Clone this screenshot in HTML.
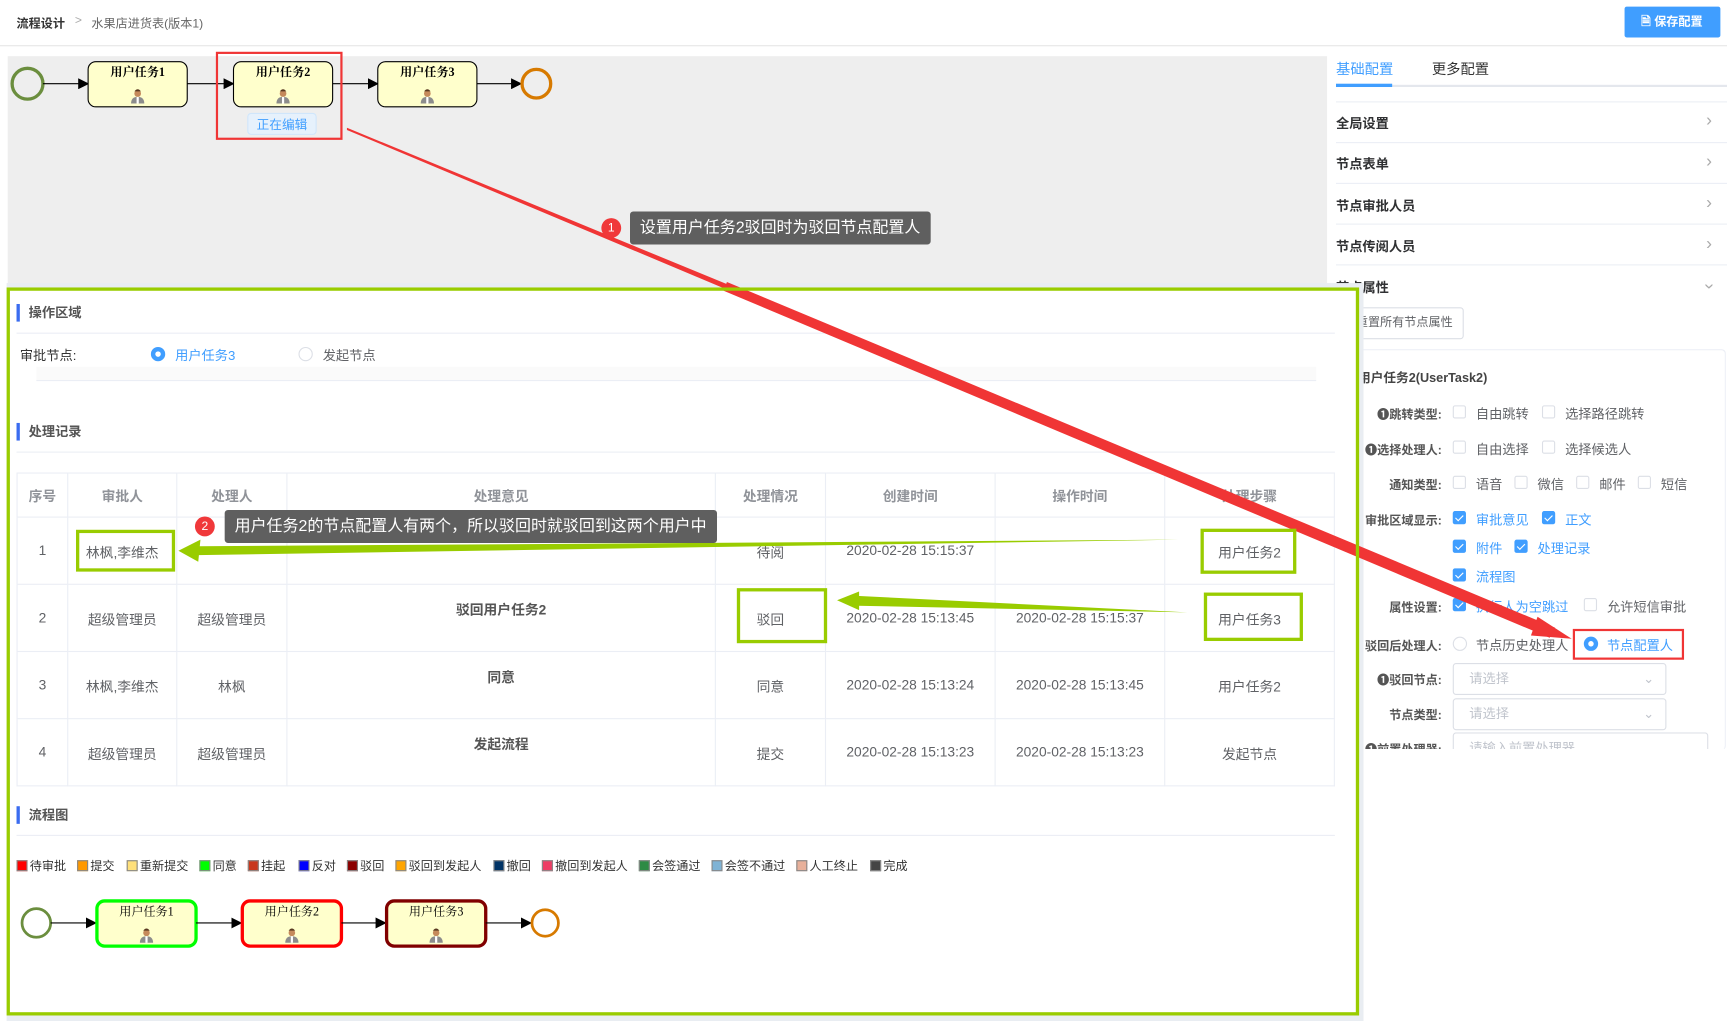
<!DOCTYPE html>
<html><head><meta charset="utf-8">
<style>
*{margin:0;padding:0;box-sizing:border-box}
html,body{width:1727px;height:1021px;overflow:hidden;background:#fff}
#w{position:absolute;left:0;top:0;width:1568px;height:927px;transform:scale(1.10140);transform-origin:0 0;font-family:"Liberation Sans","Noto Sans CJK SC",sans-serif;font-size:12px;color:#303133}
.a{position:absolute;white-space:nowrap}
.rowsep{position:absolute;left:1213px;width:355px;height:1px;background:#ebeef5}
.rt{position:absolute;left:1213px;font-size:12px;font-weight:bold;color:#303133}
.chev{position:absolute;left:1549px;color:#aaa;font-size:16px;line-height:16px}
.lbl{position:absolute;width:80px;text-align:right;left:1229px;font-size:11px;font-weight:bold;color:#555}
.cb{position:absolute;width:12px;height:12px;border:1px solid #dcdfe6;border-radius:2px;background:#fff}
.cb.on{background:#409eff;border-color:#409eff}
.cb.on:after{content:"";position:absolute;left:3px;top:1px;width:3px;height:6px;border:solid #fff;border-width:0 1px 1px 0;transform:rotate(45deg)}
.ct{position:absolute;font-size:12px;color:#606266}
.ct.b{color:#409eff}
.sec{position:absolute;left:15px;border-left:3px solid #3a6cf0;padding-left:8px;font-size:12px;font-weight:bold;color:#555;height:16px;line-height:16px}
.hl{position:absolute;height:1px;background:#ebeef5}
table{position:absolute;left:15px;top:429px;width:1197px;border-collapse:collapse;font-size:12.5px;color:#606266}
td{border:1px solid #ebeef5;text-align:center}
thead td{height:40px;color:#909399;font-weight:bold}
tbody td{height:61px}
.lg{position:absolute;top:778px;font-size:11px;color:#333}
.lg i{display:inline-block;width:10px;height:10px;vertical-align:-1px;margin-right:2px;border:1px solid #888}
.gbox{position:absolute;border:3px solid #99cc00}
.rbox{position:absolute;border:2px solid #f03535}
.tip{position:absolute;background:#5f5f5f;color:#fff;font-size:14.5px;padding:0 9px;line-height:30px;border-radius:3px}
.num{position:absolute;width:18px;height:18px;border-radius:9px;background:#f0383a;color:#fff;font-size:11px;text-align:center;line-height:18px}
</style></head><body><div id="w">
<div class="a" style="left:15px;top:13px;font-weight:bold;font-size:11px;color:#333">流程设计</div>
<div class="a" style="left:68px;top:13px;font-size:11px;color:#aaa">&gt;</div>
<div class="a" style="left:83px;top:13px;font-size:11px;color:#666">水果店进货表(版本1)</div>
<div class="a" style="left:0;top:41px;width:1568px;height:1px;background:#e6e6e6"></div>
<div class="a" style="left:1475px;top:6px;width:87px;height:28px;background:#409eff;border-radius:2px;color:#fff;font-size:11px;font-weight:bold;line-height:28px;padding-left:15px">🗎 保存配置</div>
<div class="a" style="left:7px;top:51px;width:1198px;height:212px;background:#eeeeee"></div>
<div class="a" style="left:1205px;top:51px;width:8px;height:876px;background:#fff"></div>
<div class="a" style="left:1213px;top:52px;font-size:13px;color:#409eff">基础配置</div>
<div class="a" style="left:1300px;top:52px;font-size:13px;color:#333">更多配置</div>
<div class="a" style="left:1213px;top:77px;width:355px;height:2px;background:#e4e7ed"></div>
<div class="a" style="left:1213px;top:76px;width:51px;height:3px;background:#409eff"></div>
<div class="rowsep" style="top:92px"></div>
<div class="rt" style="top:103px">全局设置</div><div class="chev" style="top:102px">›</div>
<div class="rowsep" style="top:129px"></div>
<div class="rt" style="top:140px">节点表单</div><div class="chev" style="top:139px">›</div>
<div class="rowsep" style="top:166px"></div>
<div class="rt" style="top:178px">节点审批人员</div><div class="chev" style="top:177px">›</div>
<div class="rowsep" style="top:203px"></div>
<div class="rt" style="top:215px">节点传阅人员</div><div class="chev" style="top:214px">›</div>
<div class="rowsep" style="top:240px"></div>
<div class="rt" style="top:252px">节点属性</div><div class="chev" style="top:252px;transform:rotate(90deg)">›</div>
<div class="a" style="left:1222px;top:279px;width:107px;height:29px;border:1px solid #dcdfe6;border-radius:3px;font-size:11px;color:#606266;line-height:27px;padding-left:8px">重置所有节点属性</div>
<div class="a" style="left:1225px;top:317px;width:342px;height:364px;border:1px solid #ebeef5;border-bottom:none;border-radius:4px"></div>
<div class="a" style="left:1225px;top:680px;width:343px;height:247px;background:#fff"></div>
<div class="a" style="left:1233px;top:335px;font-size:11.5px;font-weight:bold;color:#444">用户任务2(UserTask2)</div>
<div class="lbl" style="top:368px">❶跳转类型:</div>
<div class="cb" style="left:1319px;top:368px"></div><div class="ct" style="left:1340px;top:367px">自由跳转</div>
<div class="cb" style="left:1400px;top:368px"></div><div class="ct" style="left:1421px;top:367px">选择路径跳转</div>
<div class="lbl" style="top:400px">❶选择处理人:</div>
<div class="cb" style="left:1319px;top:400px"></div><div class="ct" style="left:1340px;top:399px">自由选择</div>
<div class="cb" style="left:1400px;top:400px"></div><div class="ct" style="left:1421px;top:399px">选择候选人</div>
<div class="lbl" style="top:432px">通知类型:</div>
<div class="cb" style="left:1319px;top:432px"></div><div class="ct" style="left:1340px;top:431px">语音</div>
<div class="cb" style="left:1375px;top:432px"></div><div class="ct" style="left:1396px;top:431px">微信</div>
<div class="cb" style="left:1431px;top:432px"></div><div class="ct" style="left:1452px;top:431px">邮件</div>
<div class="cb" style="left:1487px;top:432px"></div><div class="ct" style="left:1508px;top:431px">短信</div>
<div class="lbl" style="top:464px">审批区域显示:</div>
<div class="cb on" style="left:1319px;top:464px"></div><div class="ct b" style="left:1340px;top:463px">审批意见</div>
<div class="cb on" style="left:1400px;top:464px"></div><div class="ct b" style="left:1421px;top:463px">正文</div>
<div class="cb on" style="left:1319px;top:490px"></div><div class="ct b" style="left:1340px;top:489px">附件</div>
<div class="cb on" style="left:1375px;top:490px"></div><div class="ct b" style="left:1396px;top:489px">处理记录</div>
<div class="cb on" style="left:1319px;top:516px"></div><div class="ct b" style="left:1340px;top:515px">流程图</div>
<div class="lbl" style="top:543px">属性设置:</div>
<div class="cb on" style="left:1319px;top:543px"></div><div class="ct b" style="left:1340px;top:542px">执行人为空跳过</div>
<div class="cb" style="left:1438px;top:543px"></div><div class="ct" style="left:1459px;top:542px">允许短信审批</div>
<div class="lbl" style="top:578px">驳回后处理人:</div>
<div class="a" style="left:1319px;top:578px;width:13px;height:13px;border:1px solid #dcdfe6;border-radius:7px"></div><div class="ct" style="left:1340px;top:577px">节点历史处理人</div>
<div class="a" style="left:1438px;top:578px;width:13px;height:13px;border:4px solid #409eff;border-radius:7px;background:#fff"></div><div class="ct b" style="left:1459px;top:577px">节点配置人</div>
<div class="lbl" style="top:609px">❶驳回节点:</div>
<div class="a" style="left:1319px;top:602px;width:194px;height:29px;border:1px solid #dcdfe6;border-radius:3px;color:#c0c4cc;font-size:12px;line-height:27px;padding-left:14px">请选择<span style="position:absolute;right:10px;color:#c0c4cc">⌄</span></div>
<div class="lbl" style="top:641px">节点类型:</div>
<div class="a" style="left:1319px;top:634px;width:194px;height:29px;border:1px solid #dcdfe6;border-radius:3px;color:#c0c4cc;font-size:12px;line-height:27px;padding-left:14px">请选择<span style="position:absolute;right:10px;color:#c0c4cc">⌄</span></div>
<div class="a" style="left:1225px;top:665px;width:340px;height:15px;overflow:hidden">
<div class="a" style="left:4px;top:7px;width:80px;text-align:right;font-size:11px;font-weight:bold;color:#555">❶前置处理器:</div>
<div class="a" style="left:94px;top:0;width:232px;height:29px;border:1px solid #dcdfe6;border-radius:3px;color:#c0c4cc;font-size:12px;line-height:27px;padding-left:14px">请输入前置处理器</div></div>

<div class="a" style="left:6px;top:257px;width:1232px;height:670px;background:#e9edf2"></div>
<div class="a" style="left:6px;top:261px;width:1228px;height:661px;background:#fff"></div>
<div class="sec" style="top:276px">操作区域</div>
<div class="hl" style="left:15px;top:302px;width:1197px"></div>
<div class="a" style="left:18px;top:314px;font-size:12px;color:#333">审批节点:</div>
<div class="a" style="left:137px;top:315px;width:13px;height:13px;border:4px solid #409eff;border-radius:7px"></div>
<div class="a" style="left:159px;top:314px;font-size:12px;color:#409eff">用户任务3</div>
<div class="a" style="left:271px;top:315px;width:13px;height:13px;border:1px solid #dcdfe6;border-radius:7px"></div>
<div class="a" style="left:293px;top:314px;font-size:12px;color:#606266">发起节点</div>
<div class="a" style="left:33px;top:333px;width:1162px;height:13px;background:#fafafa;border-bottom:1px solid #ebeef5"></div>
<div class="sec" style="top:384px">处理记录</div>
<div class="hl" style="left:15px;top:410px;width:1197px"></div>
<table>
<colgroup><col style="width:46px"><col style="width:99px"><col style="width:100px"><col style="width:389px"><col style="width:100px"><col style="width:154px"><col style="width:154px"><col></colgroup>
<thead><tr><td>序号</td><td>审批人</td><td>处理人</td><td>处理意见</td><td>处理情况</td><td>创建时间</td><td>操作时间</td><td>处理步骤</td></tr></thead>
<tbody>
<tr><td>1</td><td>林枫,李维杰</td><td></td><td></td><td>待阅</td><td>2020-02-28 15:15:37</td><td></td><td>用户任务2</td></tr>
<tr><td>2</td><td>超级管理员</td><td>超级管理员</td><td style="vertical-align:top;padding-top:12px;font-weight:bold;color:#555">驳回用户任务2</td><td>驳回</td><td>2020-02-28 15:13:45</td><td>2020-02-28 15:15:37</td><td>用户任务3</td></tr>
<tr><td>3</td><td>林枫,李维杰</td><td>林枫</td><td style="vertical-align:top;padding-top:12px;font-weight:bold;color:#555">同意</td><td>同意</td><td>2020-02-28 15:13:24</td><td>2020-02-28 15:13:45</td><td>用户任务2</td></tr>
<tr><td>4</td><td>超级管理员</td><td>超级管理员</td><td style="vertical-align:top;padding-top:12px;font-weight:bold;color:#555">发起流程</td><td>提交</td><td>2020-02-28 15:13:23</td><td>2020-02-28 15:13:23</td><td>发起节点</td></tr>
</tbody></table>
<div class="sec" style="top:732px">流程图</div>
<div class="hl" style="left:15px;top:758px;width:1197px"></div>
<div class="lg" style="left:15px"><i style="background:#f00"></i>待审批</div>
<div class="lg" style="left:70px"><i style="background:#f90"></i>提交</div>
<div class="lg" style="left:115px"><i style="background:#ffe07a"></i>重新提交</div>
<div class="lg" style="left:181px"><i style="background:#0f0"></i>同意</div>
<div class="lg" style="left:225px"><i style="background:#c8381e"></i>挂起</div>
<div class="lg" style="left:271px"><i style="background:#00f"></i>反对</div>
<div class="lg" style="left:315px"><i style="background:#8b0000"></i>驳回</div>
<div class="lg" style="left:359px"><i style="background:#ffa500"></i>驳回到发起人</div>
<div class="lg" style="left:448px"><i style="background:#003366"></i>撤回</div>
<div class="lg" style="left:492px"><i style="background:#ee3c64"></i>撤回到发起人</div>
<div class="lg" style="left:580px"><i style="background:#2e8b45"></i>会签通过</div>
<div class="lg" style="left:646px"><i style="background:#7fb3d5"></i>会签不通过</div>
<div class="lg" style="left:723px"><i style="background:#e8b09a"></i>人工终止</div>
<div class="lg" style="left:790px"><i style="background:#444"></i>完成</div>

<svg class="a" style="left:0;top:0" width="1568" height="927" viewBox="0 0 1568 927">
<defs>
<g id="p"><circle cx="0" cy="-5" r="3" fill="#c58a5b"/><path d="M-3,-7 q3,-4 6,0 z" fill="#5a3a22"/><path d="M-6,4 q0,-6 6,-6 q6,0 6,6 z" fill="#8c8c8c"/><rect x="-1" y="-2" width="2" height="6" fill="#fff"/></g>
<marker id="ar" markerWidth="10" markerHeight="10" refX="9" refY="5" orient="auto" markerUnits="userSpaceOnUse"><path d="M0,0 L10,5 L0,10 z" fill="#000"/></marker>
</defs>
<g font-family="Liberation Serif,Noto Serif CJK SC,serif" font-size="11" font-weight="bold" text-anchor="middle">
<circle cx="25" cy="76" r="14" fill="none" stroke="#6b8e3e" stroke-width="3"/>
<line x1="39" y1="76" x2="80" y2="76" stroke="#000" marker-end="url(#ar)"/>
<rect x="80" y="56" width="90" height="41" rx="7" fill="#ffffcc" stroke="#000"/><text x="125" y="69">用户任务1</text><use href="#p" x="125" y="90"/>
<line x1="170" y1="76" x2="212" y2="76" stroke="#000" marker-end="url(#ar)"/>
<rect x="212" y="56" width="90" height="41" rx="7" fill="#ffffcc" stroke="#000"/><text x="257" y="69">用户任务2</text><use href="#p" x="257" y="90"/>
<line x1="302" y1="76" x2="343" y2="76" stroke="#000" marker-end="url(#ar)"/>
<rect x="343" y="56" width="90" height="41" rx="7" fill="#ffffcc" stroke="#000"/><text x="388" y="69">用户任务3</text><use href="#p" x="388" y="90"/>
<line x1="433" y1="76" x2="473" y2="76" stroke="#000" marker-end="url(#ar)"/>
<circle cx="487" cy="76" r="13" fill="none" stroke="#d77a00" stroke-width="3"/>
<circle cx="33" cy="838" r="13" fill="none" stroke="#6b8e3e" stroke-width="2.5"/>
<line x1="46" y1="838" x2="87" y2="838" stroke="#000" marker-end="url(#ar)"/>
<rect x="88" y="818" width="90" height="41" rx="7" fill="#ffffcc" stroke="#0f0" stroke-width="3"/><text x="133" y="831" font-weight="normal">用户任务1</text><use href="#p" x="133" y="852"/>
<line x1="178" y1="838" x2="219" y2="838" stroke="#000" marker-end="url(#ar)"/>
<rect x="220" y="818" width="90" height="41" rx="7" fill="#ffffcc" stroke="#f00" stroke-width="3"/><text x="265" y="831" font-weight="normal">用户任务2</text><use href="#p" x="265" y="852"/>
<line x1="310" y1="838" x2="350" y2="838" stroke="#000" marker-end="url(#ar)"/>
<rect x="351" y="818" width="90" height="41" rx="7" fill="#ffffcc" stroke="#800000" stroke-width="3"/><text x="396" y="831" font-weight="normal">用户任务3</text><use href="#p" x="396" y="852"/>
<line x1="441" y1="838" x2="482" y2="838" stroke="#000" marker-end="url(#ar)"/>
<circle cx="495" cy="838" r="12" fill="none" stroke="#d77a00" stroke-width="2.5"/>
</g>
<rect x="225" y="103" width="62" height="19" rx="3" fill="#e6f1fc" stroke="#d0e6fb"/>
<text x="256" y="117" text-anchor="middle" font-family="Liberation Sans,Noto Sans CJK SC,sans-serif" font-size="11.5" fill="#409eff">正在编辑</text>
<path d="M315,116 L660,258 L1410,572 L1408,576 L658,262 L315,118 z" fill="#f03535"/>
<path d="M660,256 L1412,570 L1407,579 L657,264 z" fill="#f03535"/>
<path d="M1396,560 L1427,580 L1390,577 z" fill="#f03535"/>
<path d="M180,496 L1070,490 L180,504 z" fill="#99cc00"/>
<path d="M162,500 L182,490 L180,510 z" fill="#99cc00"/>
<path d="M778,541 L1078,556 L778,550 z" fill="#99cc00"/>
<path d="M760,545 L780,537 L780,554 z" fill="#99cc00"/>
</svg>
<div class="gbox" style="left:6px;top:261px;width:1228px;height:661px"></div>
<div class="gbox" style="left:69px;top:481px;width:90px;height:38px"></div>
<div class="gbox" style="left:669px;top:534px;width:82px;height:50px"></div>
<div class="gbox" style="left:1090px;top:480px;width:87px;height:41px"></div>
<div class="gbox" style="left:1093px;top:538px;width:90px;height:44px"></div>
<div class="rbox" style="left:196px;top:47px;width:115px;height:80px"></div>
<div class="rbox" style="left:1428px;top:571px;width:101px;height:28px"></div>
<div class="num" style="left:546px;top:198px">1</div>
<div class="tip" style="left:572px;top:192px">设置用户任务2驳回时为驳回节点配置人</div>
<div class="num" style="left:177px;top:469px">2</div>
<div class="tip" style="left:204px;top:463px">用户任务2的节点配置人有两个，所以驳回时就驳回到这两个用户中</div>
</div></body></html>
